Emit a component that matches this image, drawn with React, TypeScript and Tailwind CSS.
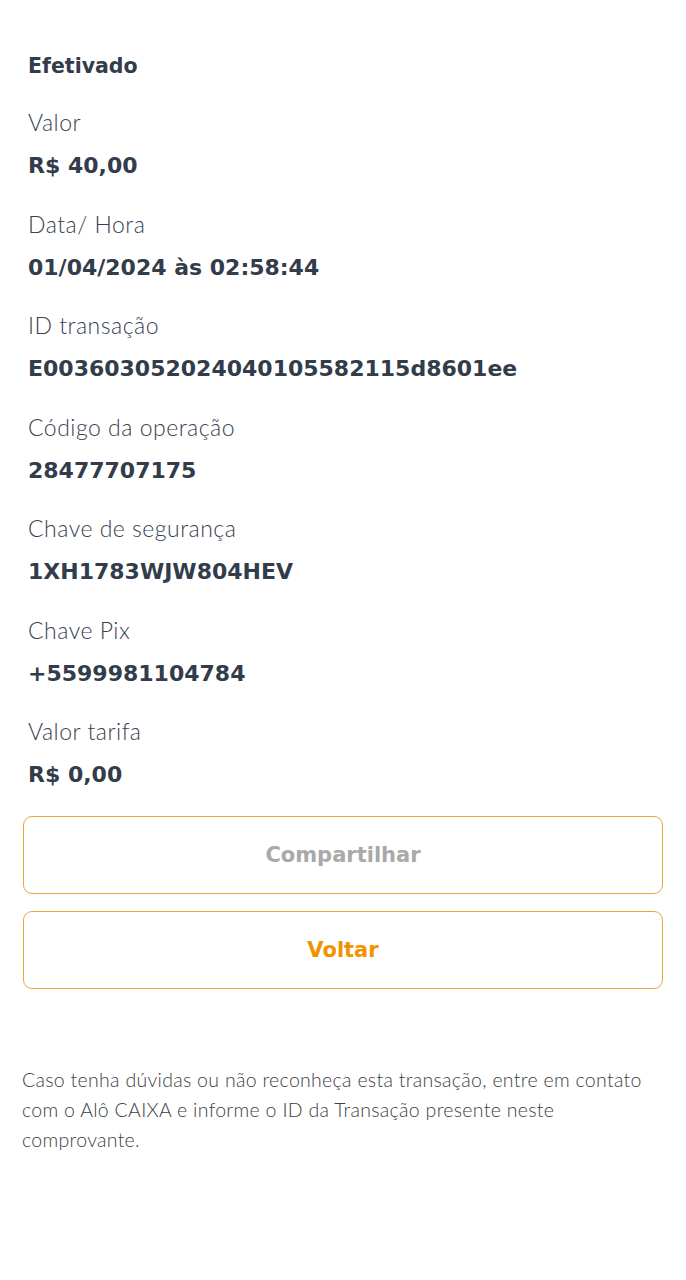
const items = [
  { label: "Valor", value: "R$ 40,00" },
  { label: "Data/ Hora", value: "01/04/2024 às 02:58:44" },
  { label: "ID transação", value: "E003603052024040105582115d8601ee" },
  { label: "Código da operação", value: "28477707175" },
  { label: "Chave de segurança", value: "1XH1783WJW804HEV" },
  { label: "Chave Pix", value: "+5599981104784" },
  { label: "Valor tarifa", value: "R$ 0,00" },
];

export default function App() {
  return (
    <div className="min-h-[1280px] w-[686px] bg-white font-['Lato',sans-serif] text-[#37414f]">
      <div className="px-[28px] pt-[44px]">
        <h1 className="font-['DejaVu_Sans',sans-serif] text-[20.5px] font-bold leading-[44px] text-[#323c4a]">
          Efetivado
        </h1>
        <dl className="mt-[12px]">
          {items.map((item) => (
            <div key={item.label} className="pb-[13.5px]">
              <dt className="text-[23px] font-light leading-[44px] tracking-[0.5px]">{item.label}</dt>
              <dd className="font-['DejaVu_Sans',sans-serif] text-[22px] font-bold leading-[44px] text-[#323c4a]">
                {item.value}
              </dd>
            </div>
          ))}
        </dl>
      </div>

      <div className="mt-[5px] flex flex-col gap-[17px] px-[23px]">
        <button className="h-[78px] w-full rounded-[9px] border-[1.5px] border-[#e9a73c] bg-white pt-[3px] font-['DejaVu_Sans',sans-serif] text-[21px] font-bold text-[#a9a9a9]">
          Compartilhar
        </button>
        <button className="h-[78px] w-full rounded-[9px] border-[1.5px] border-[#e9a73c] bg-white pt-[3px] font-['DejaVu_Sans',sans-serif] text-[21px] font-bold text-[#f39200]">
          Voltar
        </button>
      </div>

      <p className="mt-[76px] px-[22px] text-[19.5px] font-light leading-[30px] tracking-[0.3px] text-[#3d4044]">
        Caso tenha dúvidas ou não reconheça esta transação, entre em contato
        <br />
        com o Alô CAIXA e informe o ID da Transação presente neste
        <br />
        comprovante.
      </p>
    </div>
  );
}
